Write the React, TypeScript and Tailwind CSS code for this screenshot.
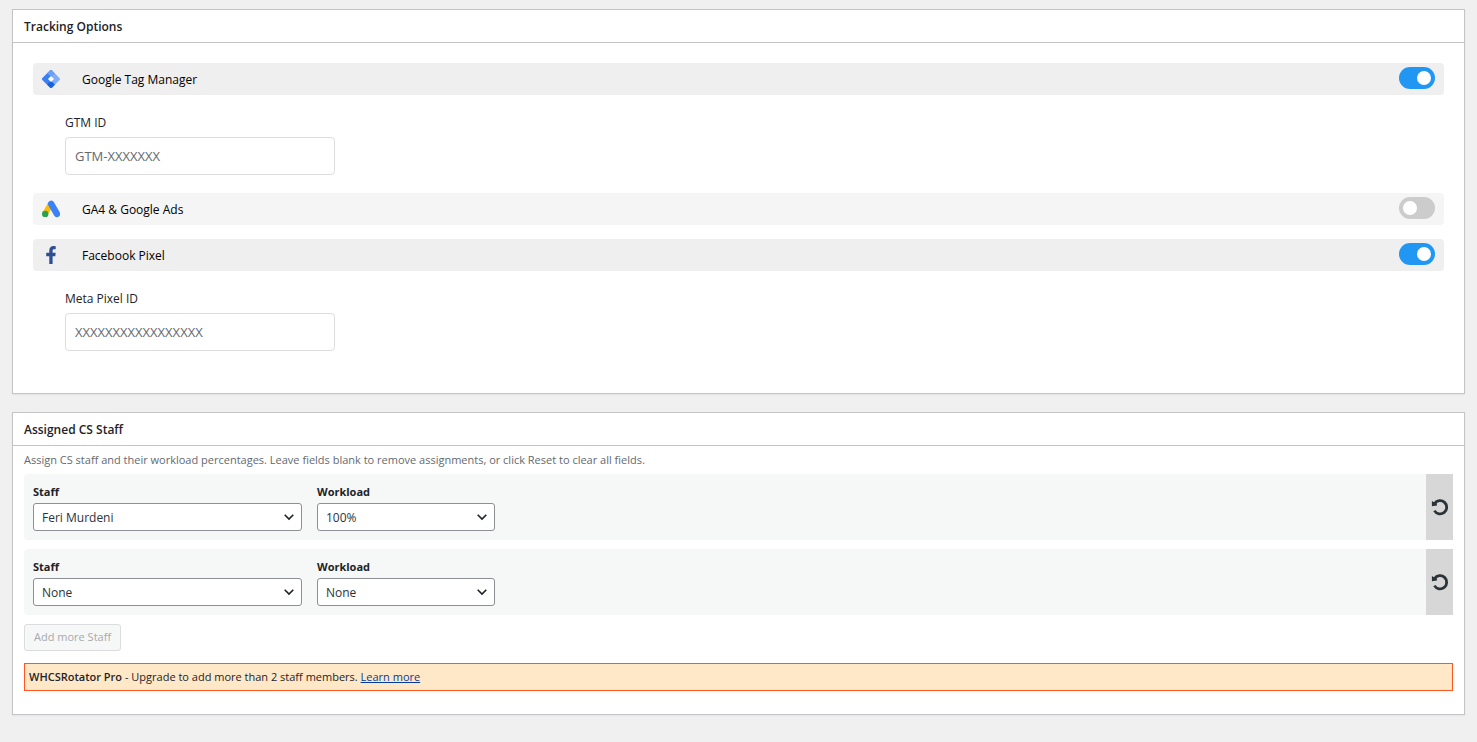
import { ReactNode, useState } from "react";

const GtmIcon = () => (
  <svg width="18" height="18" viewBox="0 0 18 18" aria-hidden="true">
    <path d="M8 0.5a1.4 1.4 0 0 1 2 0L17.5 8a1.4 1.4 0 0 1 0 2L10 17.5a1.4 1.4 0 0 1-2 0L0.5 10a1.4 1.4 0 0 1 0-2Z" fill="#7fadf8" />
    <path d="M8 0.5 0.5 8a1.4 1.4 0 0 0 0 2L8 17.5a1.4 1.4 0 0 0 2 0L12.8 14.7 7 9 12 3.6 10 0.5a1.4 1.4 0 0 0-2 0Z" fill="#3b80f3" />
    <path d="M8 0.5a1.4 1.4 0 0 1 2 0L13 3.5 9 6.5 5.2 3.3Z" fill="#6ba0f7" />
    <path d="M5 14.5 9 10.8 12.8 14.7 10 17.5a1.4 1.4 0 0 1-2 0Z" fill="#1a62dd" />
    <path d="M9 6 12 9 9 12 6 9Z" fill="#fff" />
  </svg>
);

const AdsIcon = () => (
  <svg width="18" height="18" viewBox="0 0 18 18" aria-hidden="true">
    <path d="M8.6 4.2 3.3 13.6" stroke="#fbbc04" strokeWidth="5.8" strokeLinecap="butt" />
    <path d="M9.2 3.9 14.9 13.9" stroke="#3b82f6" strokeWidth="6.4" strokeLinecap="round" />
    <circle cx="3.2" cy="13.9" r="3.2" fill="#2ba24c" />
  </svg>
);

const FacebookIcon = () => (
  <svg width="18" height="18" viewBox="0 0 18 18" aria-hidden="true">
    <path
      d="M7.3 18V10.2H4.2V6.7H7.3V4.3C7.3 1.6 8.9 0 11.5 0c1 0 1.8.1 2.2.2v3h-1.6c-1.2 0-1.5.7-1.5 1.6v1.9h3.1l-.4 3.5h-2.7V18Z"
      fill="#2f4f95"
    />
  </svg>
);

const ResetIcon = () => (
  <svg width="18" height="18" viewBox="0 0 18 18" fill="none" aria-hidden="true">
    <path d="M3.6 5.6A6.6 6.6 0 1 1 3.4 12.6" stroke="#2c3338" strokeWidth="2.8" />
    <path d="M0.9 2.9 2.6 4 5.8 5.4 6 7.4 0.9 8.2Z" fill="#2c3338" />
  </svg>
);

const Panel = ({ title, children }: { title: string; children: ReactNode }) => (
  <section className="border border-[#c3c4c7] bg-white shadow-xs">
    <h2 className="border-b border-[#c3c4c7] px-[11px] pt-[7px] pb-[5px] text-[12px] leading-5 font-semibold text-[#1d2327]">
      {title}
    </h2>
    {children}
  </section>
);

type TrackingRowProps = {
  id: string;
  label: string;
  icon: ReactNode;
  checked: boolean;
  onChange: (checked: boolean) => void;
};

const TrackingRow = ({ id, label, icon, checked, onChange }: TrackingRowProps) => (
  <div
    className={`flex h-8 items-center rounded-sm px-[9px] ${
      checked ? "bg-[#efefef]" : "bg-[#f5f5f5]"
    }`}
  >
    {icon}
    <label htmlFor={id} className="ml-[22px] flex-1 pt-0.5 text-[12px] leading-5 text-black">
      {label}
    </label>
    <input
      id={id}
      type="checkbox"
      checked={checked}
      onChange={(e) => onChange(e.target.checked)}
      className="mt-1 h-[22px] w-9 cursor-pointer appearance-none self-start rounded-full bg-[#ccc] p-1 before:block before:size-[14px] before:rounded-full before:bg-white checked:bg-[#2196f3] checked:before:ml-[14px]"
    />
  </div>
);

type TextFieldProps = { id: string; label: string; placeholder: string };

const TextField = ({ id, label, placeholder }: TextFieldProps) => (
  <div className="flex flex-col items-start gap-1 pt-[18px] pl-8">
    <label htmlFor={id} className="text-[12px] leading-5 font-medium text-[#1d2327]">
      {label}
    </label>
    <input
      id={id}
      type="text"
      placeholder={placeholder}
      className="h-[38px] w-[270px] rounded-sm border border-[#ddd] bg-white px-[9px] text-[13px] text-[#2c3338] placeholder:text-[#646970]"
    />
  </div>
);

type SelectFieldProps = {
  id: string;
  label: string;
  width: string;
  options: string[];
  value: string;
  onChange: (value: string) => void;
};

const SelectField = ({ id, label, width, options, value, onChange }: SelectFieldProps) => (
  <div className={`flex flex-col gap-0.5 ${width}`}>
    <label htmlFor={id} className="text-[11px] leading-[18px] font-bold text-[#1d2327]">
      {label}
    </label>
    <div className="relative">
      <select
        id={id}
        value={value}
        onChange={(e) => onChange(e.target.value)}
        className="block h-7 w-full appearance-none rounded-[3px] border border-[#8c8f94] bg-white px-2 pt-0.5 text-[12px] text-[#2c3338]"
      >
        {options.map((option) => (
          <option key={option}>{option}</option>
        ))}
      </select>
      <svg
        className="pointer-events-none absolute top-2 right-[7px]"
        width="12"
        height="12"
        viewBox="0 0 12 12"
        fill="none"
        aria-hidden="true"
      >
        <path d="M1.7 3.8 6 8.1 10.3 3.8" stroke="#1d2327" strokeWidth="1.6" />
      </svg>
    </div>
  </div>
);

const staffOptions = ["None", "Feri Murdeni"];
const workloadOptions = ["None", "25%", "50%", "75%", "100%"];

const App: React.FC = () => {
  const [gtm, setGtm] = useState(true);
  const [ads, setAds] = useState(false);
  const [facebook, setFacebook] = useState(true);
  const [assignments, setAssignments] = useState([
    { staff: "Feri Murdeni", workload: "100%" },
    { staff: "None", workload: "None" },
  ]);

  const updateRow = (index: number, changes: { staff?: string; workload?: string }) => {
    setAssignments((prev) =>
      prev.map((row, i) => (i === index ? { ...row, ...changes } : row))
    );
  };

  return (
    <main className="flex min-h-screen flex-col gap-[18px] bg-[#f0f0f0] px-3 pt-[9px] pb-6 font-['Segoe_UI','Open_Sans',sans-serif]">
      <Panel title="Tracking Options">
        <div className="px-5 pt-5 pb-[42px]">
          <TrackingRow
            id="gtm"
            label="Google Tag Manager"
            icon={<GtmIcon />}
            checked={gtm}
            onChange={setGtm}
          />
          {gtm && <TextField id="gtm-id" label="GTM ID" placeholder="GTM-XXXXXXX" />}
          <div className="h-[18px]" />
          <TrackingRow
            id="ads"
            label="GA4 & Google Ads"
            icon={<AdsIcon />}
            checked={ads}
            onChange={setAds}
          />
          <div className="h-[14px]" />
          <TrackingRow
            id="facebook"
            label="Facebook Pixel"
            icon={<FacebookIcon />}
            checked={facebook}
            onChange={setFacebook}
          />
          {facebook && (
            <TextField id="pixel-id" label="Meta Pixel ID" placeholder="XXXXXXXXXXXXXXXXX" />
          )}
        </div>
      </Panel>

      <Panel title="Assigned CS Staff">
        <div className="px-[11px] pt-1 pb-[23px]">
          <p className="mb-1 text-[11px] leading-5 text-[#646970]">
            Assign CS staff and their workload percentages. Leave fields blank to remove
            assignments, or click Reset to clear all fields.
          </p>

          <div className="flex flex-col gap-[9px]">
            {assignments.map((row, index) => (
              <div
                key={index}
                className="flex overflow-hidden rounded-l-sm bg-[#f6f7f7]"
              >
                <div className="flex flex-1 gap-[15px] p-[9px]">
                  <SelectField
                    id={`staff-${index}`}
                    label="Staff"
                    width="w-[269px]"
                    options={staffOptions}
                    value={row.staff}
                    onChange={(staff) => updateRow(index, { staff })}
                  />
                  <SelectField
                    id={`workload-${index}`}
                    label="Workload"
                    width="w-[178px]"
                    options={workloadOptions}
                    value={row.workload}
                    onChange={(workload) => updateRow(index, { workload })}
                  />
                </div>
                <button
                  type="button"
                  aria-label="Reset"
                  onClick={() => updateRow(index, { staff: "None", workload: "None" })}
                  className="flex w-[27px] cursor-pointer items-center justify-center bg-[#d7d7d7]"
                >
                  <ResetIcon />
                </button>
              </div>
            ))}
          </div>

          <button
            type="button"
            disabled
            className="mt-[9px] block h-[27px] rounded-[3px] border border-[#dcdcde] bg-[#f6f7f7] px-[9px] text-[11px] text-[#a7aaad]"
          >
            Add more Staff
          </button>

          <p className="mt-3 border border-[#ff5722] bg-[#ffe8c8] px-1 py-[3px] text-[11px] leading-5 text-[#1d2327]">
            <strong className="font-semibold">WHCSRotator Pro</strong> - Upgrade to add more
            than 2 staff members.{" "}
            <a href="#" className="text-[#043b9c] underline">
              Learn more
            </a>
          </p>
        </div>
      </Panel>
    </main>
  );
};

export default App;
